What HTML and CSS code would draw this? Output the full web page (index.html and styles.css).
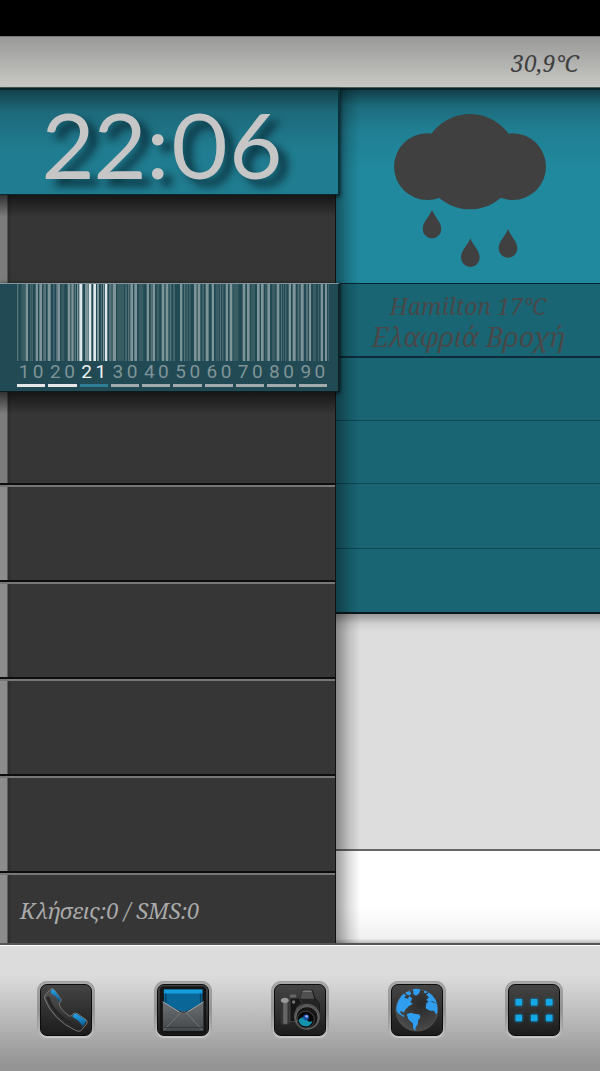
FILE: index.html
```
<!DOCTYPE html>
<html lang="el">
<head>
    <meta charset="UTF-8">
    <meta name="viewport" content="width=device-width, initial-scale=1.0">
    <title>Home screen</title>
    <link rel="stylesheet" href="styles.css">
</head>
<body>

<div class="status-bar"></div>

<header class="top-bar">
    <span>30,9°C</span>
</header>

<main class="board">
    <section class="left">
        <div class="clock">
            <time datetime="22:06">22:06</time>
        </div>
        <div class="row row-first"></div>
        <div class="barcode">
            <svg class="bars" viewBox="0 0 936 231" preserveAspectRatio="none" aria-hidden="true">
                <g id="bars"></g>
            </svg>
            <div class="scale" id="scale"></div>
        </div>
        <div class="row row-under"></div>
        <div class="row"></div>
        <div class="row"></div>
        <div class="row"></div>
        <div class="row"></div>
        <div class="row row-last">
            <span>Κλήσεις:0 / SMS:0</span>
        </div>
    </section>

    <section class="right">
        <div class="weather">
            <svg width="152" height="154" viewBox="192 251 456 462" role="img" aria-label="Rain">
                <g fill="#404040">
                    <circle cx="292" cy="409" r="100"/>
                    <circle cx="420" cy="394" r="143"/>
                    <circle cx="548" cy="409" r="100"/>
                    <path d="M306 538C314 560 334 574 334 596A28 28 0 0 1 278 596C278 574 298 560 306 538Z"/>
                    <path d="M421 624C429 646 449 660 449 682A28 28 0 0 1 393 682C393 660 413 646 421 624Z"/>
                    <path d="M534 596C542 618 562 632 562 654A28 28 0 0 1 506 654C506 632 526 618 534 596Z"/>
                </g>
            </svg>
        </div>
        <div class="forecast">
            <p class="city">Hamilton 17°C</p>
            <p class="sky">Ελαφριά Βροχή</p>
        </div>
        <div class="slot"></div>
        <div class="slot"></div>
        <div class="slot"></div>
        <div class="slot"></div>
        <div class="light"></div>
        <div class="white"></div>
    </section>
</main>

<nav class="dock">
    <button type="button" aria-label="Phone">
        <svg viewBox="0 0 153 153">
            <defs>
                <linearGradient id="metal" x1="0" y1="0" x2="0" y2="1">
                    <stop offset="0" stop-color="#555"/>
                    <stop offset="1" stop-color="#222"/>
                </linearGradient>
                <linearGradient id="blue" x1="0" y1="0" x2="0" y2="1">
                    <stop offset="0" stop-color="#25a4ea"/>
                    <stop offset="1" stop-color="#07568a"/>
                </linearGradient>
            </defs>
            <path d="M13 30L30 12Q35 9 40 14L62 44Q64 51 56 54Q54 72 87 95Q94 97 97 89Q104 83 112 88L139 107Q144 113 139 120L122 140Q116 144 106 139Q38 108 12 44Q9 35 13 30Z" fill="url(#metal)" stroke="#777" stroke-width="3"/>
            <path d="M20 36Q34 80 78 110Q96 122 112 130" fill="none" stroke="#262626" stroke-width="9"/>
            <path d="M31 14L39 14L61 44L55 51Q48 34 31 27Z" fill="url(#blue)"/>
            <path d="M97 93Q104 84 112 90L139 109L128 128Q117 108 97 99Z" fill="url(#blue)"/>
        </svg>
    </button>
    <button type="button" aria-label="Messages">
        <svg viewBox="0 0 153 153">
            <defs>
                <linearGradient id="paper" x1="0" y1="0" x2="0" y2="1">
                    <stop offset="0" stop-color="#6c7072"/>
                    <stop offset="1" stop-color="#44484a"/>
                </linearGradient>
            </defs>
            <rect x="6" y="4" width="141" height="145" rx="12" fill="#151515"/>
            <path d="M15 52V141H139V52L84 84H70Z" fill="url(#paper)"/>
            <path d="M18 14H136V54L86 82Q78 78 70 82L18 54Z" fill="#0b6698"/>
            <path d="M18 14H136V26H18Z" fill="#139ddb"/>
            <path d="M24 26V54M130 26V54" stroke="#064466" stroke-width="4"/>
            <path d="M18 138L68 86Q78 76 88 86L136 138" fill="none" stroke="#85898b" stroke-width="2"/>
            <path d="M14 51L66 83M140 51L90 83" stroke="#a5a9ab" stroke-width="3"/>
            <path d="M18 130H136" stroke="#35393b" stroke-width="3"/>
        </svg>
    </button>
    <button type="button" aria-label="Camera">
        <svg viewBox="0 0 153 153">
            <path d="M80 40L84 16H114L122 40L136 56V112H54V40Z" fill="#242424" stroke="#111" stroke-width="2"/>
            <path d="M78 38L84 18Q98 12 113 18L120 42H80Z" fill="#505050"/>
            <path d="M84 19H112" stroke="#888" stroke-width="3"/>
            <rect x="17" y="40" width="29" height="82" rx="9" fill="#353535"/>
            <rect x="25" y="48" width="13" height="72" rx="6" fill="#666"/>
            <ellipse cx="30" cy="47" rx="12" ry="8" fill="#999"/>
            <path d="M46 40H74L82 54L66 70V112H46Z" fill="#171717" stroke="#555" stroke-width="2"/>
            <rect x="45" y="29" width="20" height="9" rx="3" fill="#666"/>
            <circle cx="57" cy="52" r="5" fill="#777"/>
            <circle cx="98" cy="97" r="40" fill="#555"/>
            <circle cx="98" cy="100" r="34" fill="#171717" stroke="#888" stroke-width="2"/>
            <circle cx="94" cy="106" r="26" fill="#080808" stroke="#454545" stroke-width="3"/>
            <path d="M72 106A22 22 0 0 0 115 111Q98 117 94 98Q82 96 72 106Z" fill="#1593ae"/>
            <circle cx="95" cy="99" r="9" fill="#124ea4"/>
            <circle cx="97" cy="96" r="4" fill="#a3a9ff"/>
        </svg>
    </button>
    <button type="button" aria-label="Browser">
        <svg viewBox="0 0 153 153">
            <defs>
                <radialGradient id="sea" cx="0.6" cy="0.35" r="0.7">
                    <stop offset="0" stop-color="#292929"/>
                    <stop offset="1" stop-color="#4c4c4c"/>
                </radialGradient>
            </defs>
            <circle cx="76" cy="77" r="64" fill="url(#sea)" stroke="#5d5d5d" stroke-width="2"/>
            <g fill="#2f9df0">
                <path d="M14 66Q19 43 35 27L43 31L37 39L49 42L53 34L62 41L56 53L64 57L51 65L42 74L36 84L30 80L23 82L31 91L39 94L36 98L19 87L13 77Z"/>
                <path d="M42 23L53 18L59 25L54 32L43 28Z"/>
                <path d="M64 13Q76 10 87 14L83 25L74 33L66 29Z"/>
                <path d="M45 89L59 85L67 88L84 90L87 99L80 108L79 119L72 130L72 141L65 133L64 118L50 105Z"/>
                <path d="M105 30L113 23Q132 37 138 57L124 50L112 52L105 45L113 38Z"/>
                <path d="M105 55L117 50L137 57Q142 76 136 91L128 79L116 79L103 71Z"/>
                <path d="M100 17L109 21L103 26L97 22Z"/>
            </g>
        </svg>
    </button>
    <button type="button" aria-label="Apps">
        <svg viewBox="0 0 153 153">
            <defs>
                <filter id="glow" x="-20%" y="-30%" width="140%" height="160%">
                    <feGaussianBlur stdDeviation="5"/>
                </filter>
            </defs>
            <path d="M20 43h20v20h-20zM67 43h20v20h-20zM113 43h20v20h-20zM20 91h20v20h-20zM67 91h20v20h-20zM113 91h20v20h-20z" fill="#0a8fc9" filter="url(#glow)"/>
            <path d="M20 43h20v20h-20zM67 43h20v20h-20zM113 43h20v20h-20zM20 91h20v20h-20zM67 91h20v20h-20zM113 91h20v20h-20z" fill="#14a9e6"/>
        </svg>
    </button>
</nav>

<script>
// [left, right] edges of every bar, grouped by tone
const tones = {
    "#3a5d64": [[13,25],[133,142],[301,321],[365,379],[419,427],[596,607],[649,664],[702,714],[765,775],[888,897]],
    "#567379": [[0,4],[39,41],[44,47],[79,87],[109,112],[117,120],[173,177],[252,255],[276,284],[325,329],[333,337],[401,406],[458,463],[469,473],[501,505],[509,512],[517,520],[556,560],[609,612],[616,619],[746,748],[792,795],[799,801],[805,808],[842,847],[867,873],[903,905],[933,935]],
    "#7d9598": [[26,33],[56,63],[67,75],[92,101],[121,129],[152,160],[163,170],[180,184],[204,213],[240,246],[258,262],[287,297],[340,348],[352,360],[389,396],[407,414],[434,442],[446,454],[489,496],[531,539],[542,550],[566,575],[584,591],[626,633],[638,646],[677,685],[690,698],[720,728],[732,740],[751,759],[779,787],[815,822],[827,836],[851,860],[876,882],[911,918],[924,930]],
    "#e0e8e9": [[187,196],[215,223],[229,237],[264,271]]
};

const bars = document.getElementById("bars");
for (const color in tones) {
    const path = document.createElementNS("http://www.w3.org/2000/svg", "path");
    path.setAttribute("fill", color);
    path.setAttribute("d", tones[color].map(([a, b]) => `M${a} 0H${b}V231H${a}Z`).join(""));
    bars.appendChild(path);
}

// minutes scale, the third step is the current one
const steps = ["10", "20", "21", "30", "40", "50", "60", "70", "80", "90"];
const scale = document.getElementById("scale");
steps.forEach((step, i) => {
    const cell = document.createElement("div");
    cell.className = "step" + (i < 2 ? " done" : i === 2 ? " now" : "");
    cell.innerHTML = `<span>${step[0]}</span><span>${step[1]}</span>`;
    scale.appendChild(cell);
});
</script>

</body>
</html>
```

FILE: styles.css
```
* {
    box-sizing: border-box;
}

body {
    margin: 0;
    min-height: 100vh;
    display: flex;
    flex-direction: column;
    background-color: #000;
    font-family: 'Noto Serif', 'Droid Serif', 'Liberation Serif', serif;
    font-style: italic;
}

p {
    margin: 0;
}

.status-bar {
    height: 36px;
    background-color: #000;
}

.top-bar {
    height: 52px;
    display: flex;
    align-items: center;
    justify-content: flex-end;
    padding: 2px 21px 0;
    background: linear-gradient(#999, #c8c8c4);
    border-top: 1px solid #777;
    border-bottom: 1px solid #4d5a5a;
    color: #404040;
    font-size: 23px;
}

.board {
    flex: 1;
    display: grid;
    grid-template-columns: 56% 1fr;
}

/* left column */

.left {
    position: relative;
    z-index: 1;
    display: flex;
    flex-direction: column;
    background-color: #363636;
    border-right: 1px solid #111;
}

.clock {
    height: 107px;
    margin-right: -5px;
    display: flex;
    align-items: center;
    padding: 4px 0 0 42px;
    background: linear-gradient(#12424b, #1d6a7b 22px, #207c90 60px, #207c90);
    border-top: 2px solid #08262c;
    border-right: 2px solid #0a3039;
    border-bottom: 1px solid #082930;
    box-shadow: 0 2px 4px rgba(0, 0, 0, 0.7);
    color: #c6c6c6;
    font-family: Lato, sans-serif;
    font-style: normal;
    font-size: 92px;
    line-height: 100px;
    font-variant-numeric: proportional-nums;
    text-shadow: 9px 7px 8px rgba(0, 20, 30, 0.7);
}

.row {
    height: 97px;
    border-top: 2px solid #0d0d0d;
    background: linear-gradient(#777 2px, transparent 2px),
        linear-gradient(90deg, #8c8c8c 7px, #2d2d2d 8px, #363636 12px);
}

.row-first,
.row-under {
    border-top: 0;
    background: linear-gradient(rgba(0, 0, 0, 0.6), transparent 22px),
        linear-gradient(90deg, #7c7c7c 7px, #2d2d2d 8px, #363636 12px);
}

.row-first {
    height: 88px;
}

.row-under {
    height: 91px;
}

.row-last {
    flex: 1;
    display: flex;
    align-items: center;
    padding: 4px 20px 0;
    color: #aaa;
    font-size: 22px;
}

.barcode {
    height: 109px;
    margin-right: -5px;
    padding: 0 9px 0 17px;
    background-color: #224a54;
    border-top: 1px solid #84979a;
    border-right: 2px solid #0c2328;
    border-bottom: 1px solid #0c1d21;
    box-shadow: 0 1px 4px rgba(0, 0, 0, 0.8);
}

.bars {
    display: block;
    width: 100%;
    height: 77px;
}

.scale {
    display: grid;
    grid-template-columns: repeat(10, 1fr);
    column-gap: 3px;
    padding-right: 2px;
}

.step {
    display: flex;
    justify-content: space-around;
    height: 26px;
    border-bottom: 3px solid #a1aaac;
    color: #7f9497;
    font-family: Roboto, sans-serif;
    font-style: normal;
    font-size: 19px;
    line-height: 22px;
}

.step.done {
    border-color: #e4e8e9;
}

.step.now {
    border-color: #2f7e93;
    color: #eef2f3;
}

/* right column */

.right {
    position: relative;
    display: flex;
    flex-direction: column;
}

/* shadow that the left column throws */
.right::before {
    content: "";
    position: absolute;
    top: 0;
    bottom: 0;
    left: 0;
    width: 24px;
    background: linear-gradient(90deg, rgba(0, 0, 0, 0.38), rgba(0, 0, 0, 0.12) 14px, transparent);
}

.weather {
    height: 195px;
    display: flex;
    justify-content: center;
    padding: 24px 0 0 4px;
    background: linear-gradient(#103f48, #1c6b7c 16px, #207f93 40px, #21899e 80px);
    border-top: 2px solid #08262c;
}

.forecast {
    height: 75px;
    padding: 7px 0 0;
    background-color: #196574;
    border-top: 1px solid #07262e;
    border-bottom: 2px solid #0e2b3b;
    color: #484848;
    text-align: center;
}

.city {
    font-size: 23px;
    line-height: 30px;
}

.sky {
    font-size: 27px;
    line-height: 32px;
}

.slot {
    height: 63px;
    background-color: #196574;
    border-bottom: 1px solid #0f4753;
}

.slot:nth-of-type(n + 5) {
    height: 65px;
}

.slot:nth-of-type(6) {
    border-bottom: 2px solid #0b191c;
}

.light {
    height: 237px;
    background: linear-gradient(#999, #d0d0d0 10px, #ddd 18px);
    border-bottom: 2px solid #666;
}

.white {
    flex: 1;
    background: linear-gradient(#fff 60%, #f0f0f0 95%, #bbb);
}

/* dock */

.dock {
    height: 128px;
    display: grid;
    grid-template-columns: repeat(5, 1fr);
    justify-items: center;
    align-items: start;
    padding: 36px 8px 0;
    background: linear-gradient(#dcdcdc 30px, #949494 120px);
    border-top: 2px solid #555;
    box-shadow: inset 0 1px #fff;
}

.dock button {
    width: 58px;
    height: 58px;
    padding: 3px;
    border: 0;
    border-radius: 10px;
    background: linear-gradient(#aaa, #929292 50%, #c0c0c0);
    box-shadow: inset 0 0 0 1px rgba(150, 150, 150, 0.6), inset 0 -2px 1px #ccc;
    cursor: pointer;
}

.dock svg {
    display: block;
    width: 52px;
    height: 52px;
    border: 1px solid #0c0c0c;
    border-radius: 7px;
    background: linear-gradient(#444, #1c1c1c);
}
```
